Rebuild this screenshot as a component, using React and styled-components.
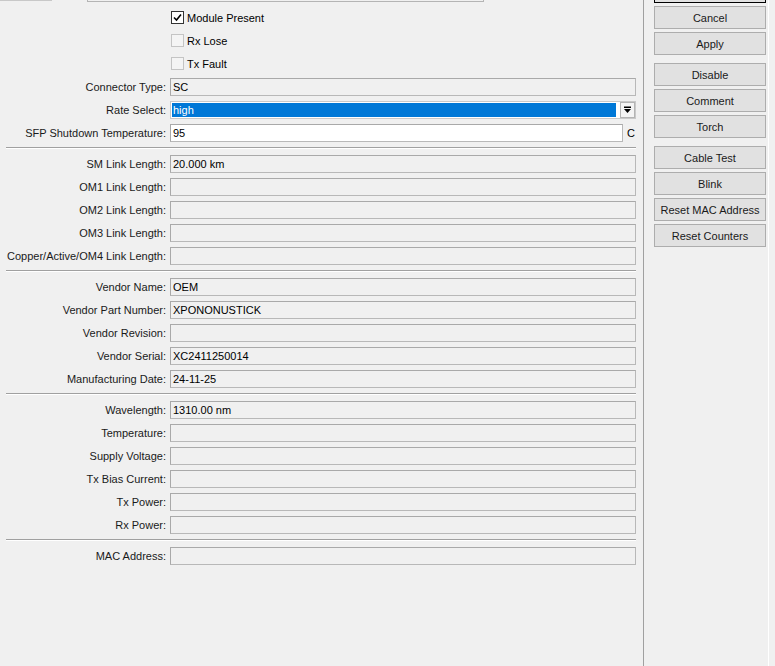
import React from 'react';
import styled, { createGlobalStyle } from 'styled-components';

const GlobalStyle = createGlobalStyle`
  html, body {
    margin: 0;
    padding: 0;
    background: #f0f0f0;
    overflow: hidden;
  }
  body {
    font-family: "Liberation Sans", Arial, sans-serif;
    font-size: 11px;
    color: #000;
  }
`;

const Window = styled.div`
  display: flex;
  height: 666px;
  background: #f0f0f0;
`;

const LeftPanel = styled.div`
  flex: 0 0 643px;
  display: flex;
  flex-direction: column;
`;

const TabStrip = styled.div`
  display: flex;
  height: 2px;
`;

const TabEdge = styled.div`
  width: ${(p) => p.$width}px;
  margin-left: ${(p) => p.$offset || 0}px;
  box-sizing: border-box;
  border-top: ${(p) => (p.$open ? 'none' : '1px solid #c8c8c8')};
  border-left: ${(p) => (p.$open ? '1px solid #b4b4b4' : 'none')};
  border-right: ${(p) => (p.$open ? '1px solid #b4b4b4' : 'none')};
  border-bottom: ${(p) => (p.$open ? '1px solid #b4b4b4' : 'none')};
`;

const Form = styled.div`
  display: flex;
  flex-direction: column;
  padding: 4px 7px 0 0;
`;

const Row = styled.div`
  display: grid;
  grid-template-columns: 166px 1fr;
  column-gap: 4px;
  align-items: center;
  height: 23px;
`;

const Label = styled.div`
  text-align: right;
  white-space: nowrap;
  color: #1a1a1a;
`;

const Field = styled.div`
  height: 18px;
  box-sizing: border-box;
  border: 1px solid #a9a9a9;
  border-right-color: #b8b8b8;
  border-bottom-color: #b8b8b8;
  background: ${(p) => (p.$editable ? '#ffffff' : '#f0f0f0')};
  padding: 0 2px;
  line-height: 16px;
  white-space: nowrap;
  overflow: hidden;
`;

const FieldWithUnit = styled.div`
  display: grid;
  grid-template-columns: 453px 1fr;
  column-gap: 4px;
  align-items: center;
`;

const Unit = styled.span`
  line-height: 16px;
`;

const Select = styled.div`
  display: flex;
  align-items: stretch;
  height: 18px;
  box-sizing: border-box;
  border: 1px solid #c9c9c9;
  background: #ffffff;
  gap: 4px;
`;

const SelectValue = styled.div`
  flex: 1;
  margin: 1px 0 1px 1px;
  background: #0078d7;
  color: #ffffff;
  line-height: 14px;
  padding: 0 1px;
`;

const SelectButton = styled.div`
  flex: 0 0 13px;
  display: flex;
  align-items: center;
  justify-content: center;
  border: 1px solid #b4b4b4;
  background: #f4f4f4;
`;

const CheckRow = styled.div`
  display: flex;
  align-items: center;
  gap: 3px;
  padding-left: 1px;
`;

const Box = styled.span`
  width: 13px;
  height: 13px;
  box-sizing: border-box;
  border: 1px solid ${(p) => (p.$checked ? '#333333' : '#c4c4c4')};
  background: ${(p) => (p.$checked ? '#ffffff' : '#f4f4f4')};
  display: flex;
  align-items: center;
  justify-content: center;
`;

const Separator = styled.div`
  margin: 3px 0 3px 6px;
  border-top: 1px solid #a0a0a0;
  border-bottom: 1px solid #ffffff;
`;

const RightPanel = styled.div`
  flex: 0 0 126px;
  box-sizing: border-box;
  border-left: 1px solid #a0a0a0;
  border-right: 1px solid #ffffff;
  padding: 0 0 0 10px;
  display: flex;
  flex-direction: column;
`;

const ButtonStack = styled.div`
  display: flex;
  flex-direction: column;
  gap: 3px;
  margin-top: ${(p) => p.$top}px;
`;

const Button = styled.div`
  width: 112px;
  height: 23px;
  box-sizing: border-box;
  border: 1px solid ${(p) => (p.$default ? '#000000' : '#adadad')};
  background: #e1e1e1;
  display: flex;
  align-items: center;
  justify-content: center;
  white-space: nowrap;
  color: #1a1a1a;
`;

const DropIcon = () => (
  <svg width="7" height="8" viewBox="0 0 7 8">
    <rect x="0" y="0.5" width="7" height="1.5" fill="#000" />
    <polygon points="0,3 7,3 3.5,7" fill="#000" />
  </svg>
);

const CheckMark = () => (
  <svg width="9" height="9" viewBox="0 0 9 9">
    <path d="M1 4.5 L3.5 7 L8 1.5" stroke="#000" strokeWidth="1.6" fill="none" />
  </svg>
);

const checks = [
  { name: 'Module Present', checked: true },
  { name: 'Rx Lose', checked: false },
  { name: 'Tx Fault', checked: false },
];

const sections = [
  [
    ['SM Link Length', '20.000 km'],
    ['OM1 Link Length', ''],
    ['OM2 Link Length', ''],
    ['OM3 Link Length', ''],
    ['Copper/Active/OM4 Link Length', ''],
  ],
  [
    ['Vendor Name', 'OEM'],
    ['Vendor Part Number', 'XPONONUSTICK'],
    ['Vendor Revision', ''],
    ['Vendor Serial', 'XC2411250014'],
    ['Manufacturing Date', '24-11-25'],
  ],
  [
    ['Wavelength', '1310.00 nm'],
    ['Temperature', ''],
    ['Supply Voltage', ''],
    ['Tx Bias Current', ''],
    ['Tx Power', ''],
    ['Rx Power', ''],
  ],
  [['MAC Address', '']],
];

// the OK button sits above the scrolled view, only its bottom edge shows
const buttonGroups = [
  [{ id: 'ok', label: '', isDefault: true }, { id: 'Cancel' }, { id: 'Apply' }],
  [{ id: 'Disable' }, { id: 'Comment' }, { id: 'Torch' }],
  [{ id: 'Cable Test' }, { id: 'Blink' }, { id: 'Reset MAC Address' }, { id: 'Reset Counters' }],
];

export default function App() {
  return (
    <>
      <GlobalStyle />
      <Window>
        <LeftPanel>
          <TabStrip>
            <TabEdge $width={52} />
            <TabEdge $width={397} $offset={35} $open />
          </TabStrip>
          <Form>
            {checks.map((c) => (
              <Row key={c.name}>
                <span />
                <CheckRow>
                  <Box $checked={c.checked}>{c.checked && <CheckMark />}</Box>
                  <span>{c.name}</span>
                </CheckRow>
              </Row>
            ))}
            <Row>
              <Label>Connector Type:</Label>
              <Field>SC</Field>
            </Row>
            <Row>
              <Label>Rate Select:</Label>
              <Select>
                <SelectValue>high</SelectValue>
                <SelectButton>
                  <DropIcon />
                </SelectButton>
              </Select>
            </Row>
            <Row>
              <Label>SFP Shutdown Temperature:</Label>
              <FieldWithUnit>
                <Field $editable>95</Field>
                <Unit>C</Unit>
              </FieldWithUnit>
            </Row>
            {sections.map((rows, i) => (
              <React.Fragment key={i}>
                <Separator />
                {rows.map(([label, value]) => (
                  <Row key={label}>
                    <Label>{label}:</Label>
                    <Field>{value}</Field>
                  </Row>
                ))}
              </React.Fragment>
            ))}
          </Form>
        </LeftPanel>
        <RightPanel>
          {buttonGroups.map((group, i) => (
            <ButtonStack key={i} $top={i === 0 ? -20 : 8}>
              {group.map((b) => (
                <Button key={b.id} $default={b.isDefault}>
                  {b.label ?? b.id}
                </Button>
              ))}
            </ButtonStack>
          ))}
        </RightPanel>
      </Window>
    </>
  );
}
